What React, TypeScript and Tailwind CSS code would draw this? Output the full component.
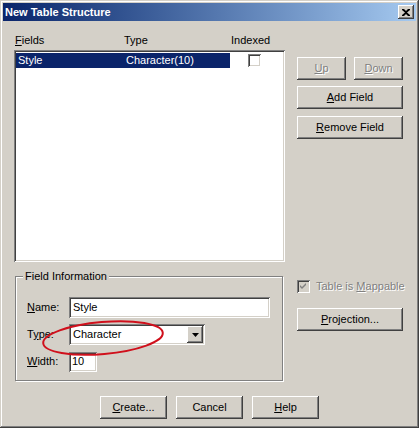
import type { ReactNode } from 'react'

const raised =
  'bg-[#d4d0c8] shadow-[inset_-1px_-1px_#404040,inset_1px_1px_#ffffff,inset_-2px_-2px_#808080,inset_2px_2px_#d4d0c8]'
const sunken =
  'shadow-[inset_1px_1px_#808080,inset_-1px_-1px_#ffffff,inset_2px_2px_#404040,inset_-2px_-2px_#d4d0c8]'
const disabledText = 'text-[#808080] [text-shadow:1px_1px_#ffffff]'

function Btn({ children, className, disabled }: { children: ReactNode; className: string; disabled?: boolean }) {
  return (
    <div className={`${raised} ${className} h-[23px] flex items-center justify-center ${disabled ? disabledText : ''}`}>
      <span>{children}</span>
    </div>
  )
}

function CheckBox({ checked, disabled }: { checked?: boolean; disabled?: boolean }) {
  return (
    <div className={`${sunken} w-[13px] h-[13px] shrink-0 flex items-center justify-center ${disabled ? 'bg-[#d4d0c8]' : 'bg-white'}`}>
      {checked && (
        <svg width="7" height="7" viewBox="0 0 7 7">
          <path d="M0 2 L2 4 L6 0 L6 2 L2 6 L0 4 Z" fill={disabled ? '#808080' : '#000'} />
        </svg>
      )}
    </div>
  )
}

function Field({ label, u, rest, children }: { label: string; u: string; rest: string; children: ReactNode }) {
  return (
    <div className="flex items-center h-[21px]">
      <span className="w-[42px]">
        {label}
        <u>{u}</u>
        {rest}
      </span>
      {children}
    </div>
  )
}

export default function App() {
  return (
    <div className="relative w-[419px] h-[428px] bg-[#d4d0c8] p-[3px] flex flex-col font-['Liberation_Sans',Arial,sans-serif] text-[11px] leading-[13px] text-black shadow-[inset_-1px_-1px_#404040,inset_1px_1px_#d4d0c8,inset_-2px_-2px_#808080,inset_2px_2px_#ffffff]">
      <div className="h-[18px] bg-linear-to-r from-[#0a246a] to-[#a6caf0] flex items-center pl-[2px] pr-[2px]">
        <span className="flex-1 font-bold text-white">New Table Structure</span>
        <div className={`${raised} w-[16px] h-[14px] flex items-center justify-center`}>
          <svg width="8" height="7" viewBox="0 0 8 7">
            <path d="M0 0h2l2 2 2-2h2v1L5 3.5 8 6v1H6L4 5 2 7H0V6l3-2.5L0 1z" fill="#000" />
          </svg>
        </div>
      </div>

      <div className="flex pl-[11px]">
        <div className="w-[271px] flex flex-col">
          <div className="h-[29px] pt-[13px] pl-[1px] grid grid-cols-[109px_107px_1fr]">
            <span>
              <u>F</u>ields
            </span>
            <span>Type</span>
            <span>Indexed</span>
          </div>
          <div className={`${sunken} h-[212px] bg-white p-[2px] pt-[3px]`}>
            <div className="flex h-[15px]">
              <div className="w-[214px] bg-[#0a246a] text-white grid grid-cols-[108px_1fr] items-center pl-[2px]">
                <span>Style</span>
                <span>Character(10)</span>
              </div>
              <div className="flex items-center pl-[18px]">
                <CheckBox />
              </div>
            </div>
          </div>

          <div className="relative mt-[14px] ml-[1px] w-[268px] h-[105px] border border-[#808080] shadow-[inset_1px_1px_#ffffff,1px_1px_#ffffff] pt-[20px] pl-[11px] flex flex-col gap-[6px]">
            <span className="absolute -top-[7px] left-[7px] bg-[#d4d0c8] px-[2px]">Field Information</span>
            <Field label="" u="N" rest="ame:">
              <div className={`${sunken} bg-white w-[201px] h-[21px] flex items-center pl-[4px]`}>Style</div>
            </Field>
            <Field label="T" u="y" rest="pe:">
              <div className={`${sunken} bg-white w-[136px] h-[21px] flex items-center p-[2px] pl-[4px]`}>
                <span className="flex-1">Character</span>
                <div className={`${raised} w-[16px] h-[17px] flex items-center justify-center`}>
                  <svg width="7" height="4" viewBox="0 0 7 4">
                    <path d="M0 0h7L3.5 4z" fill="#000" />
                  </svg>
                </div>
              </div>
            </Field>
            <Field label="" u="W" rest="idth:">
              <div className={`${sunken} bg-white w-[28px] h-[20px] flex items-center pl-[3px]`}>10</div>
            </Field>
          </div>
        </div>

        <div className="ml-[12px] w-[106px] flex flex-col">
          <div className="mt-[36px] flex gap-[8px]">
            <Btn className="w-[49px]" disabled>
              <u>U</u>p
            </Btn>
            <Btn className="w-[49px]" disabled>
              <u>D</u>own
            </Btn>
          </div>
          <Btn className="w-[106px] mt-[6px]">
            <u>A</u>dd Field
          </Btn>
          <Btn className="w-[106px] mt-[7px]">
            <u>R</u>emove Field
          </Btn>
          <div className="mt-[141px] flex items-center gap-[6px] whitespace-nowrap">
            <CheckBox checked disabled />
            <span className={disabledText}>
              Table is <u>M</u>appable
            </span>
          </div>
          <Btn className="w-[106px] mt-[15px]">
            <u>P</u>rojection...
          </Btn>
        </div>
      </div>

      <div className="mt-[15px] flex justify-center gap-[9px]">
        <Btn className="w-[67px]">
          <u>C</u>reate...
        </Btn>
        <Btn className="w-[67px]">Cancel</Btn>
        <Btn className="w-[67px]">
          <u>H</u>elp
        </Btn>
      </div>

      <svg className="absolute left-[38px] top-[316px] pointer-events-none" width="132" height="46" viewBox="0 0 132 46">
        <ellipse cx="65" cy="22" rx="60" ry="16" transform="rotate(-5 65 22)" fill="none" stroke="#d0101c" strokeWidth="2" />
      </svg>
    </div>
  )
}
